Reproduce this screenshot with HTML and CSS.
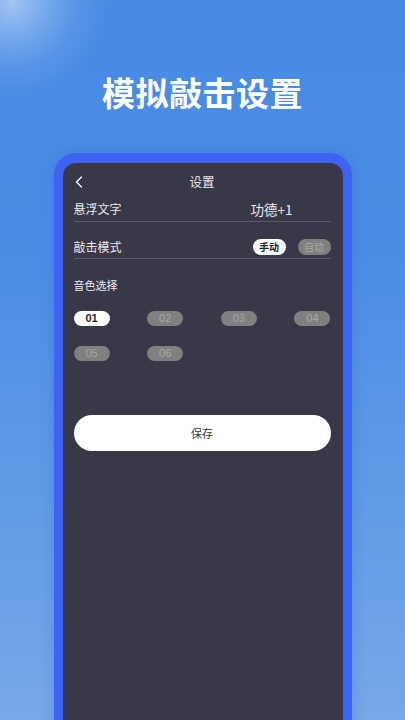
FILE: index.html
```html
<!DOCTYPE html>
<html lang="zh">
<head>
<meta charset="utf-8">
<link rel="stylesheet" href="styles.css">
</head>
<body>
<div class="page">
  <h1 class="headline">模拟敲击设置</h1>
  <div class="frame">
    <div class="screen">
      <div class="topbar">
        <svg class="back" width="8" height="12" viewBox="0 0 8 12"><polyline points="6.5,1 1.5,6 6.5,11" fill="none" stroke="#ffffff" stroke-width="1.3" stroke-linecap="round" stroke-linejoin="round"/></svg>
        <span class="topbar-title">设置</span>
      </div>
      <div class="row row-first">
        <span class="label">悬浮文字</span>
        <span class="value">功德+1</span>
      </div>
      <div class="row row-second">
        <span class="label">敲击模式</span>
        <div class="modes">
          <span class="pill pill-on">手动</span>
          <span class="pill pill-off">自动</span>
        </div>
      </div>
      <div class="section-label">音色选择</div>
      <div class="tones">
        <span class="tone tone-on">01</span>
        <span class="tone">02</span>
        <span class="tone">03</span>
        <span class="tone">04</span>
        <span class="tone">05</span>
        <span class="tone">06</span>
      </div>
      <button class="save">保存</button>
    </div>
  </div>
</div>
</body>
</html>
```

FILE: styles.css
```css
html, body {
  margin: 0;
  padding: 0;
}
body {
  width: 405px;
  height: 720px;
  overflow: hidden;
  font-family: "Noto Sans CJK SC", "Noto Sans", sans-serif;
}
.page {
  width: 405px;
  height: 720px;
  overflow: hidden;
  background:
    radial-gradient(circle at 12px 2px, rgba(235,244,255,0.55) 0px, rgba(220,235,255,0.3) 35px, rgba(255,255,255,0.08) 65px, rgba(255,255,255,0) 95px),
    linear-gradient(180deg, #498be4 0%, #4a8de5 35%, #5e99e6 65%, #77a8e7 100%);
  display: flex;
  flex-direction: column;
  align-items: center;
}
.headline {
  margin: 0;
  padding-top: 70px;
  height: 44px;
  line-height: 44px;
  font-size: 33px;
  font-weight: 700;
  color: #ffffff;
  letter-spacing: 0.5px;
}
.frame {
  margin-top: 39px;
  width: 280px;
  height: 600px;
  padding: 10px 9px 0 9px;
  background: #3d63f4;
  border-radius: 22px 22px 0 0;
  box-shadow: 0 0 14px rgba(40, 80, 170, 0.25);
  flex-shrink: 0;
}
.screen {
  height: 100%;
  background: #393848;
  border-radius: 13px 13px 0 0;
  padding: 0 12px 0 11px;
  box-sizing: border-box;
  color: #ecebf2;
}
.topbar {
  height: 37px;
  display: flex;
  align-items: center;
  justify-content: center;
  position: relative;
}
.back {
  position: absolute;
  left: 1px;
  top: 13px;
}
.topbar-title {
  font-size: 12.5px;
  line-height: 18px;
  padding-top: 1px;
}
.row {
  display: flex;
  align-items: center;
  border-bottom: 1.5px solid #5b5a6c;
}
.row-first {
  height: 18px;
  padding-bottom: 3px;
}
.row-second {
  margin-top: 16px;
  height: 18px;
  padding-bottom: 2px;
}
.label {
  font-size: 12px;
  line-height: 18px;
  flex: 1;
}
.value {
  font-size: 13.5px;
  line-height: 18px;
  width: 80px;
}
.modes {
  display: flex;
  gap: 12px;
}
.pill {
  width: 33px;
  height: 16px;
  border-radius: 8px;
  font-size: 10px;
  line-height: 16px;
  text-align: center;
}
.pill-on {
  background: #ffffff;
  color: #222222;
  font-weight: 700;
}
.pill-off {
  background: #808080;
  color: #a9a9a9;
}
.section-label {
  margin-top: 17px;
  font-size: 11px;
  line-height: 18px;
}
.tones {
  margin-top: 17px;
  display: grid;
  grid-template-columns: repeat(4, 36px);
  justify-content: space-between;
  row-gap: 20px;
}
.tone {
  height: 15px;
  border-radius: 8px;
  background: #808080;
  color: #a8a8a8;
  font-family: "Liberation Sans", Arial, sans-serif;
  font-size: 11px;
  line-height: 15px;
  text-align: center;
}
.tone-on {
  background: #ffffff;
  color: #1f1f1f;
  font-weight: 700;
}
.save {
  display: block;
  margin-top: 54px;
  width: 100%;
  height: 36px;
  border: none;
  border-radius: 18px;
  background: #ffffff;
  color: #333333;
  font-family: "Noto Sans CJK SC", sans-serif;
  font-size: 11px;
  padding: 0;
}
```
